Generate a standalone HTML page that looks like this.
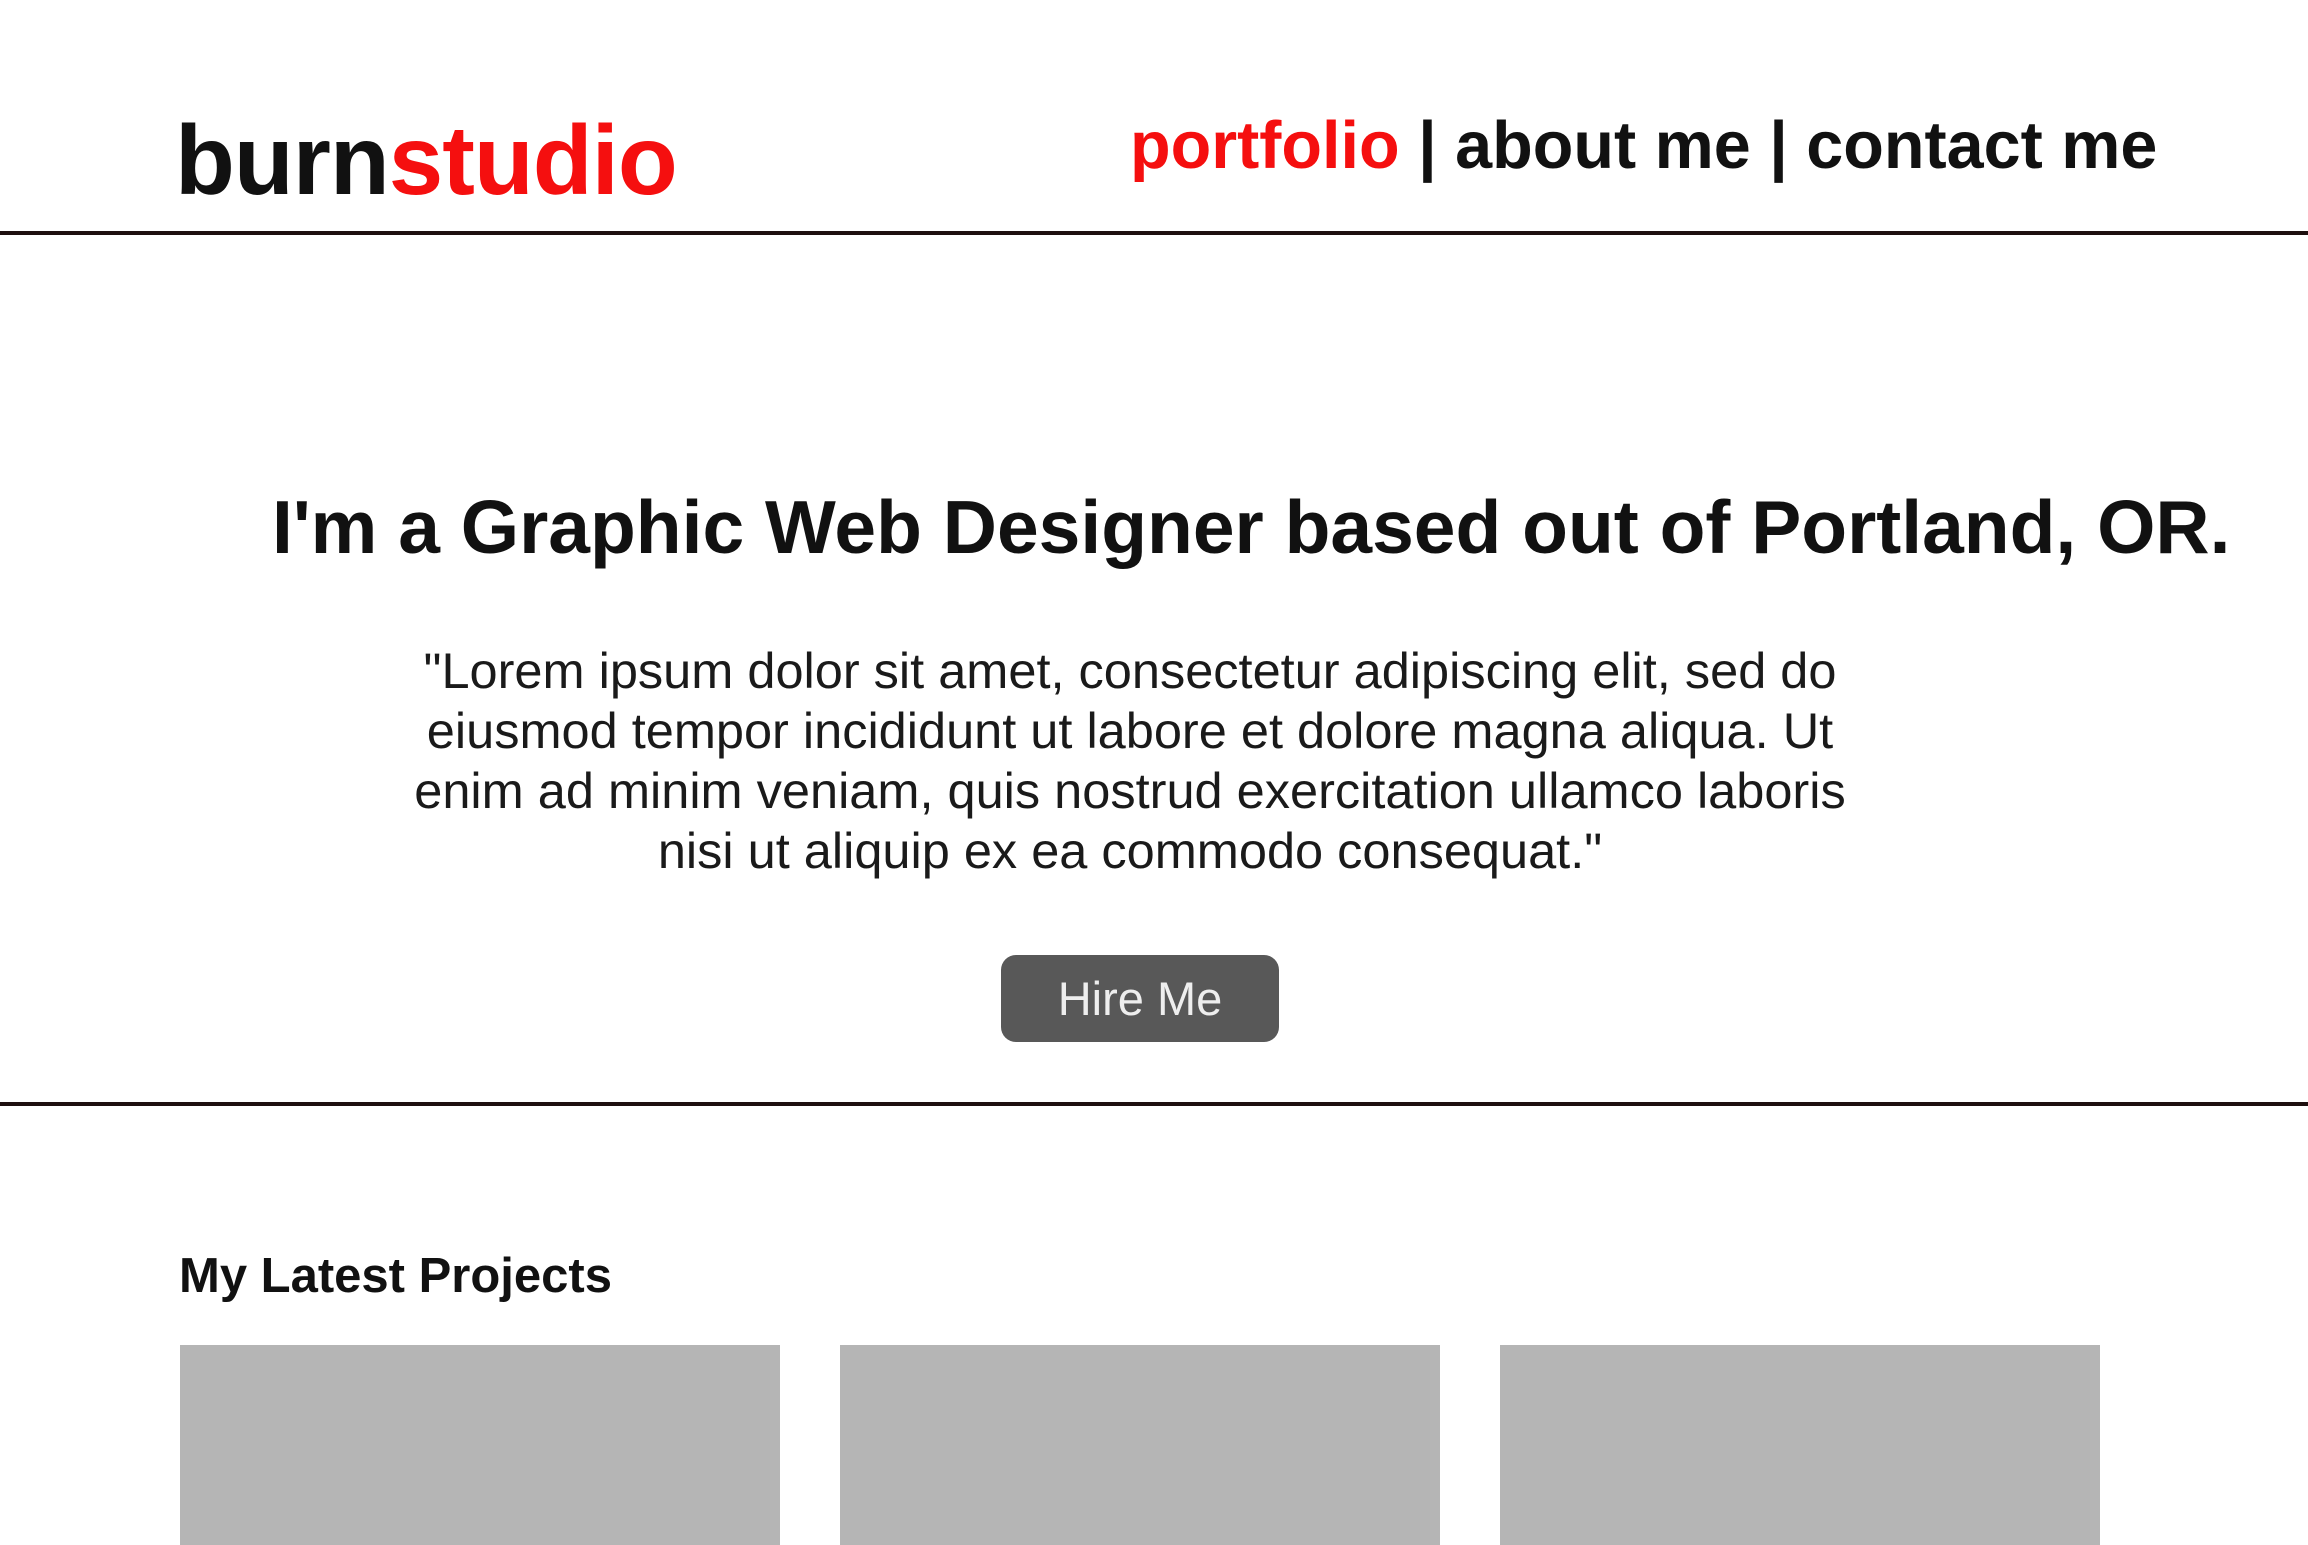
<!DOCTYPE html>
<html><head><meta charset="utf-8"><style>
html,body{margin:0;padding:0;background:#fff;}
body{width:2308px;height:1530px;position:relative;overflow:hidden;font-family:"Liberation Sans",Arial,sans-serif;color:#111;}
.abs{position:absolute;white-space:nowrap;}
.logo{left:175px;top:100px;font-size:98px;line-height:120px;font-weight:bold;letter-spacing:-1px;}
.red{color:#f50f0f;}
.nav{left:1130px;top:106px;font-size:66.5px;line-height:80px;font-weight:bold;}
.line{position:absolute;left:0;width:2308px;height:4px;background:#1e0f0f;}
.h1{left:272px;top:479px;font-size:75px;line-height:96px;font-weight:bold;}
.p{left:330px;width:1600px;top:641px;font-size:50.5px;line-height:60px;text-align:center;white-space:normal;color:#1a1a1a;}
.btn{left:1001px;top:955px;width:278px;height:87px;background:#585858;border-radius:15px;color:#eee;font-size:47px;line-height:87px;text-align:center;}
.h2{left:179px;top:1246px;font-size:49px;line-height:60px;font-weight:bold;}
.box{position:absolute;top:1345px;height:200px;width:600px;background:#b5b5b5;}
</style></head><body>
<div class="abs logo">burn<span class="red">studio</span></div>
<div class="abs nav"><span class="red">portfolio</span> | about me | contact me</div>
<div class="line" style="top:231px"></div>
<div class="abs h1">I'm a Graphic Web Designer based out of Portland, OR.</div>
<div class="abs p">"Lorem ipsum dolor sit amet, consectetur adipiscing elit, sed do<br>eiusmod tempor incididunt ut labore et dolore magna aliqua. Ut<br>enim ad minim veniam, quis nostrud exercitation ullamco laboris<br>nisi ut aliquip ex ea commodo consequat."</div>
<div class="abs btn">Hire Me</div>
<div class="line" style="top:1102px"></div>
<div class="abs h2">My Latest Projects</div>
<div class="box" style="left:180px"></div>
<div class="box" style="left:840px"></div>
<div class="box" style="left:1500px"></div>
</body></html>
